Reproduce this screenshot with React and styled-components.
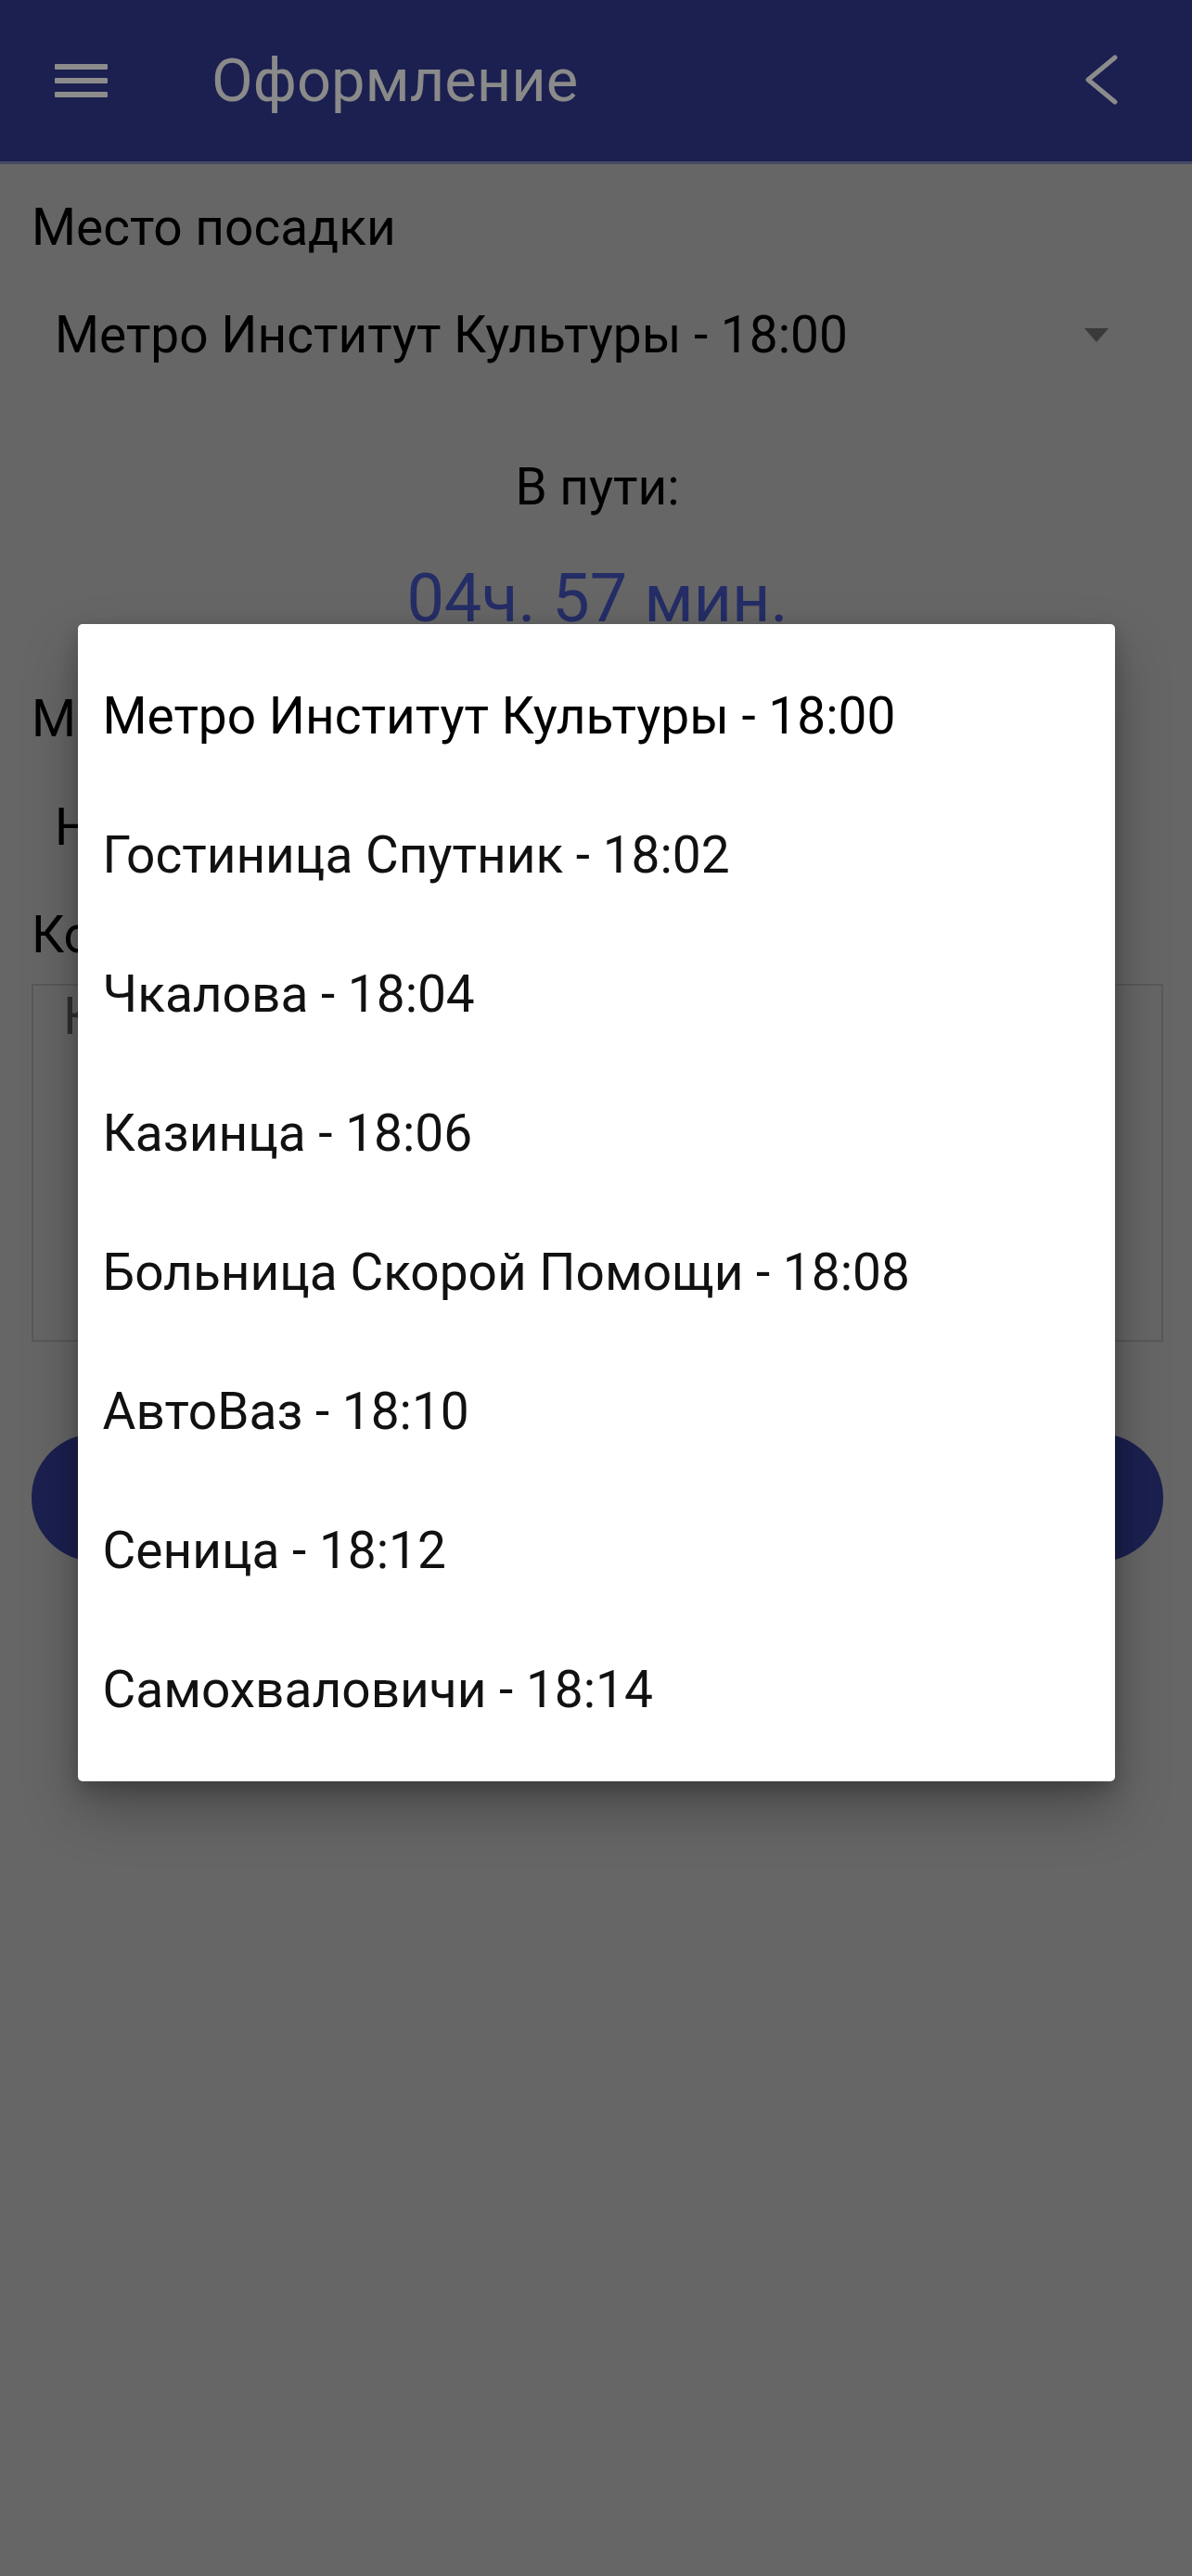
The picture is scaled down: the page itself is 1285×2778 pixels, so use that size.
import React, { useState } from "react";
import styled, { createGlobalStyle } from "styled-components";

const GlobalStyle = createGlobalStyle`
  html, body {
    margin: 0;
    padding: 0;
    background: #666666;
  }
  body {
    font-family: Roboto, "Noto Sans", "Liberation Sans", sans-serif;
  }
  * {
    box-sizing: border-box;
  }
`;

const Screen = styled.div`
  position: relative;
  width: 1285px;
  height: 2778px;
  background: #666666;
  overflow: hidden;
`;

const Toolbar = styled.div`
  height: 177px;
  background: #1b2050;
  border-bottom: 3px solid #454a68;
  display: flex;
  align-items: center;
  padding: 0 76px 0 59px;
`;

const MenuButton = styled.div`
  width: 57px;
  display: flex;
  flex-direction: column;
  gap: 9px;

  span {
    height: 6px;
    background: #8c8c8c;
    border-radius: 1px;
  }
`;

const Title = styled.div`
  flex: 1;
  margin-left: 112px;
  color: #8a8a8a;
  font-size: 65px;
  line-height: 76px;
`;

const BackButton = styled.div`
  width: 40px;
  height: 56px;
  display: flex;
  align-items: center;
  justify-content: center;
`;

const Content = styled.div`
  padding: 36px 31px 0 34px;
  display: flex;
  flex-direction: column;
`;

const Label = styled.div`
  font-size: 55px;
  line-height: 64px;
  color: #000;
  margin-top: ${(p) => p.$top || 0}px;
`;

const SelectRow = styled.div`
  display: flex;
  align-items: center;
  justify-content: space-between;
  padding: 0 59px 0 25px;
  height: 104px;
  margin-top: ${(p) => p.$top || 32}px;
  font-size: 55px;
  color: #000;
`;

const Arrow = styled.div`
  width: 0;
  height: 0;
  border-left: 13px solid transparent;
  border-right: 13px solid transparent;
  border-top: 15px solid #3a3a3a;
`;

const Duration = styled.div`
  display: flex;
  flex-direction: column;
  align-items: center;
  margin-top: 80px;
`;

const DurationLabel = styled.div`
  font-size: 55px;
  line-height: 64px;
  color: #000;
`;

const DurationValue = styled.div`
  font-size: 72px;
  line-height: 80px;
  margin-top: 49px;
  color: #252d66;
`;

const Comment = styled.div`
  margin-top: 21px;
  height: 386px;
  border: 2px solid #595959;
  padding: 1px 32px;
  font-size: 55px;
  line-height: 64px;
  color: #2e2e2e;
`;

const SubmitButton = styled.div`
  margin-top: 99px;
  height: 138px;
  border-radius: 69px;
  background: #1b2050;
  display: flex;
  align-items: center;
  justify-content: center;
  color: #8a8a8a;
  font-size: 55px;
`;

const Backdrop = styled.div`
  position: absolute;
  inset: 0;
  display: flex;
  justify-content: center;
  align-items: flex-start;
  padding-top: 673px;
`;

const Dialog = styled.div`
  width: 1118px;
  background: #ffffff;
  border-radius: 5px;
  padding: 24px 0;
  box-shadow: 0 30px 60px rgba(0, 0, 0, 0.28), 0 8px 20px rgba(0, 0, 0, 0.2);
`;

const Option = styled.div`
  height: 150px;
  display: flex;
  align-items: center;
  padding-left: 27px;
  font-size: 55px;
  color: ${(p) => (p.$active ? "#000" : "#111")};
  cursor: pointer;
`;

const stops = [
  "Метро Институт Культуры - 18:00",
  "Гостиница Спутник - 18:02",
  "Чкалова - 18:04",
  "Казинца - 18:06",
  "Больница Скорой Помощи - 18:08",
  "АвтоВаз - 18:10",
  "Сеница - 18:12",
  "Самохваловичи - 18:14",
];

const App = () => {
  const [selected, setSelected] = useState(0);

  return (
    <Screen>
      <GlobalStyle />
      <Toolbar>
        <MenuButton>
          <span />
          <span />
          <span />
        </MenuButton>
        <Title>Оформление</Title>
        <BackButton>
          <svg width="40" height="56" viewBox="0 0 40 56">
            <path
              d="M33 3 L4 27 L33 51"
              fill="none"
              stroke="#8c8c8c"
              strokeWidth="5"
              strokeLinecap="round"
              strokeLinejoin="round"
            />
          </svg>
        </BackButton>
      </Toolbar>

      <Content>
        <Label>Место посадки</Label>
        <SelectRow>
          {stops[selected]}
          <Arrow />
        </SelectRow>

        <Duration>
          <DurationLabel>В пути:</DurationLabel>
          <DurationValue>04ч. 57 мин.</DurationValue>
        </Duration>

        <Label $top={57}>Место высадки</Label>
        <SelectRow $top={33}>
          Не выбрано
          <Arrow />
        </SelectRow>

        <Label $top={32}>Комментарий</Label>
        <Comment>Комментарий</Comment>

        <SubmitButton>Оформить</SubmitButton>
      </Content>

      <Backdrop>
        <Dialog>
          {stops.map((s, i) => (
            <Option key={s} $active={i === selected} onClick={() => setSelected(i)}>
              {s}
            </Option>
          ))}
        </Dialog>
      </Backdrop>
    </Screen>
  );
};

export default App;
